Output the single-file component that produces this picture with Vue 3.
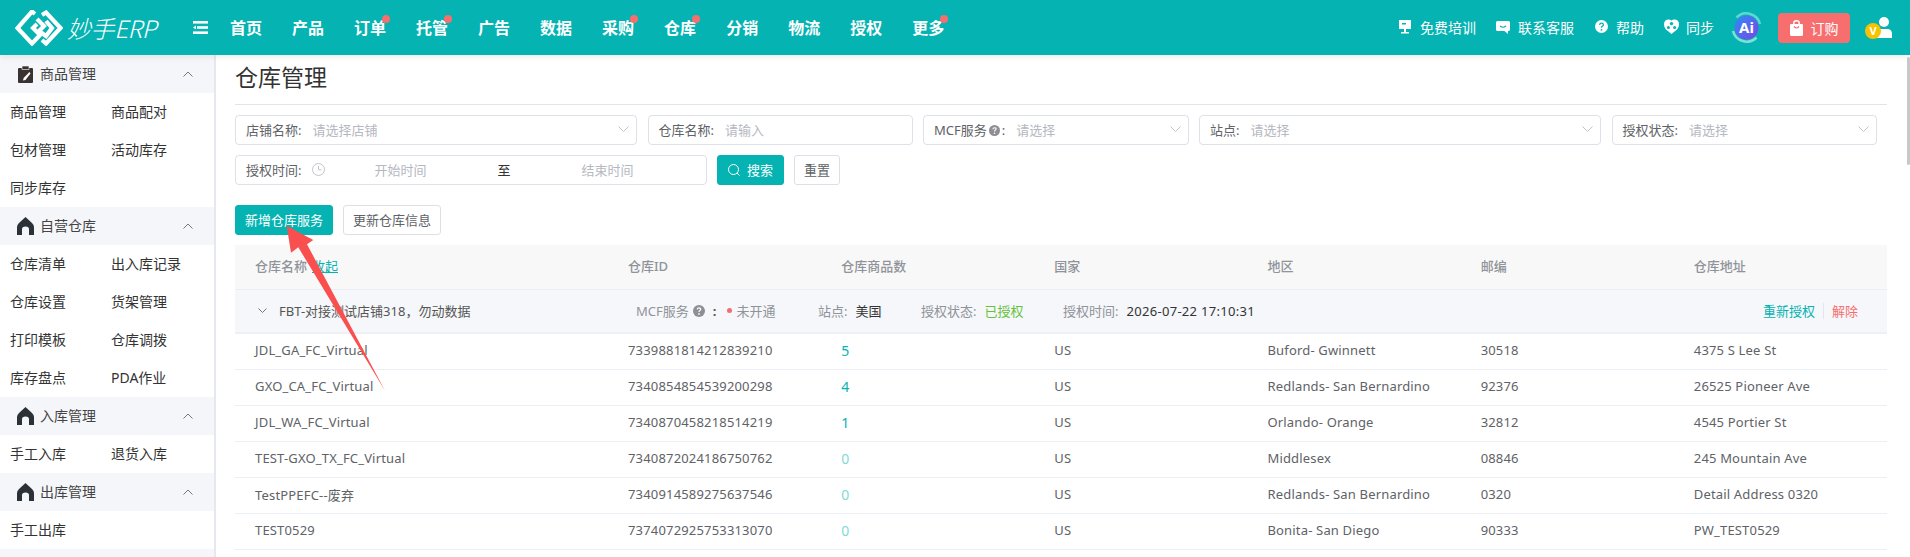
<script setup>
const navItems = [
  { label: "首页" },
  { label: "产品" },
  { label: "订单", dot: true },
  { label: "托管", dot: true },
  { label: "广告" },
  { label: "数据" },
  { label: "采购", dot: true },
  { label: "仓库", dot: true },
  { label: "分销" },
  { label: "物流" },
  { label: "授权" },
  { label: "更多", dot: true },
];

const menuGroups = [
  { title: "商品管理", icon: "clip", items: ["商品管理", "商品配对", "包材管理", "活动库存", "同步库存"] },
  { title: "自营仓库", icon: "home", items: ["仓库清单", "出入库记录", "仓库设置", "货架管理", "打印模板", "仓库调拨", "库存盘点", "PDA作业"] },
  { title: "入库管理", icon: "home", items: ["手工入库", "退货入库"] },
  { title: "出库管理", icon: "home", items: ["手工出库"] },
];

const columns = ["仓库ID", "仓库商品数", "国家", "地区", "邮编", "仓库地址"];

const rows = [
  ["JDL_GA_FC_Virtual", "7339881814212839210", 5, "US", "Buford- Gwinnett", "30518", "4375 S Lee St"],
  ["GXO_CA_FC_Virtual", "7340854854539200298", 4, "US", "Redlands- San Bernardino", "92376", "26525 Pioneer Ave"],
  ["JDL_WA_FC_Virtual", "7340870458218514219", 1, "US", "Orlando- Orange", "32812", "4545 Portier St"],
  ["TEST-GXO_TX_FC_Virtual", "7340872024186750762", 0, "US", "Middlesex", "08846", "245 Mountain Ave"],
  ["TestPPEFC--废弃", "7340914589275637546", 0, "US", "Redlands- San Bernardino", "0320", "Detail Address 0320"],
  ["TEST0529", "7374072925753313070", 0, "US", "Bonita- San Diego", "90333", "PW_TEST0529"],
];
</script>

<template>
  <div class="page">
    <header class="topbar">
      <div class="logo">
        <svg class="logo-mark" width="48" height="36" viewBox="0 0 48 36" fill="none" stroke="#fff" stroke-width="4.2">
          <path d="M20 4 L17 1.5 L2.5 18 L17 33.5 L25 25 L18 18 L22 14" />
          <path d="M27 5 L31 2.5 L45.5 18 L31 33.5 L27 30" />
          <path d="M22 9 L29 16 L24 21 L31 26 L37 18 L31 11" />
        </svg>
        <span class="logo-text">妙手ERP</span>
      </div>
      <svg class="collapse" width="15" height="13" viewBox="0 0 15 13" fill="#fff">
        <rect x="0" y="0" width="15" height="2.6" />
        <rect x="4" y="5.2" width="11" height="2.6" />
        <path d="M0 6.5 L3 4.6 V8.4 Z" />
        <rect x="0" y="10.4" width="15" height="2.6" />
      </svg>
      <nav class="nav">
        <a v-for="item in navItems" :key="item.label" class="nav-item">
          {{ item.label }}
          <i v-if="item.dot" class="nav-dot"></i>
        </a>
      </nav>
      <div class="top-right">
        <span class="top-link">
          <svg width="14" height="15" viewBox="0 0 14 15" fill="#fff">
            <path d="M1 1 H13 V10 H1 Z M4 4 V5.5 H8 V4 Z" fill-rule="evenodd" />
            <rect x="6" y="10" width="2" height="3" />
            <rect x="3" y="13" width="8" height="1.5" />
          </svg>
          免费培训
        </span>
        <span class="top-link">
          <svg width="14" height="14" viewBox="0 0 14 14" fill="#fff">
            <path d="M1.5 1 H12.5 Q14 1 14 2.5 V9.5 Q14 11 12.5 11 H12 V14 L8.5 11 H1.5 Q0 11 0 9.5 V2.5 Q0 1 1.5 1 Z" />
            <path d="M4 6 Q7 8.5 10 6" fill="none" stroke="#04b3b2" stroke-width="1.2" />
          </svg>
          联系客服
        </span>
        <span class="top-link">
          <svg width="13" height="13" viewBox="0 0 13 13">
            <circle cx="6.5" cy="6.5" r="6.5" fill="#fff" />
            <path d="M4.6 5 Q4.8 3.2 6.5 3.2 Q8.4 3.2 8.4 4.8 Q8.4 5.8 7.2 6.4 Q6.5 6.8 6.5 7.8" fill="none" stroke="#04b3b2" stroke-width="1.3" />
            <circle cx="6.5" cy="9.8" r="0.9" fill="#04b3b2" />
          </svg>
          帮助
        </span>
        <span class="top-link">
          <svg width="15" height="15" viewBox="0 0 15 15">
            <path d="M7.5 15 L2 10.5 Q0 8.5 0 5.5 Q0 1 4 .5 Q6 .2 7.5 1.5 Q9 .2 11 .5 Q15 1 15 5.5 Q15 8.5 13 10.5 Z" fill="#fff" />
            <circle cx="7.5" cy="4.6" r="1.7" fill="#04b3b2" />
            <circle cx="4.4" cy="8.6" r="1.5" fill="#04b3b2" />
            <circle cx="10.6" cy="8.6" r="1.5" fill="#04b3b2" />
          </svg>
          同步
        </span>
        <svg class="ai-badge" width="31" height="31" viewBox="0 0 31 31">
          <defs>
            <linearGradient id="aiFill" x1="0" y1="0" x2="1" y2="1">
              <stop offset="0" stop-color="#2d8cf5" />
              <stop offset="1" stop-color="#7a45e8" />
            </linearGradient>
          </defs>
          <path d="M5.5 5.5 A14 14 0 0 1 29 12" fill="none" stroke="#5fd6d0" stroke-width="2.6" />
          <path d="M25.5 25.5 A14 14 0 0 1 2 19" fill="none" stroke="#7fe0d8" stroke-width="2.6" />
          <circle cx="15.5" cy="15.5" r="12" fill="url(#aiFill)" />
          <text x="15.5" y="21" text-anchor="middle" class="ai-text">Ai</text>
        </svg>
        <button class="buy-btn">
          <svg width="13" height="16" viewBox="0 0 13 16" fill="#fff">
            <path d="M1 4 H12 Q13 4 13 5 V14.5 Q13 16 11.5 16 H1.5 Q0 16 0 14.5 V5 Q0 4 1 4 Z" />
            <path d="M3.8 5 V3 Q3.8 .8 6.5 .8 Q9.2 .8 9.2 3 V5" fill="none" stroke="#fff" stroke-width="1.5" />
            <path d="M4 6.5 Q6.5 9.5 9 6.5" fill="none" stroke="#f76e6f" stroke-width="1.2" />
          </svg>
          订购
        </button>
        <div class="user">
          <svg width="16" height="21" viewBox="0 0 16 21" fill="#fff">
            <circle cx="8" cy="5" r="5" />
            <path d="M0 21 V17 Q0 12 5 12 H11 Q16 12 16 17 V21 Z" />
          </svg>
          <span class="vip">V</span>
        </div>
      </div>
    </header>

    <div class="body">
      <aside class="sidebar">
        <section v-for="group in menuGroups" :key="group.title">
          <div class="menu-head">
            <svg v-if="group.icon === 'clip'" width="15" height="17" viewBox="0 0 15 17">
              <path d="M1 2 H14 Q15 2 15 3 V16 Q15 17 14 17 H1 Q0 17 0 16 V3 Q0 2 1 2 Z" fill="#3a3232" />
              <rect x="4" y="0" width="7" height="3.6" fill="#3a3232" stroke="#fff" stroke-width=".6" />
              <path d="M11.5 6 L12.5 7.5 L7.5 14 L5 14.6 L5.6 12 Z" fill="#fff" />
            </svg>
            <svg v-else width="17" height="18" viewBox="0 0 17 18">
              <path d="M8.5 0 L15 6 Q17 8 17 10 V18 H12 V12 Q12 9.5 8.5 9.5 Q5 9.5 5 12 V18 H0 V10 Q0 8 2 6 Z" fill="#2c3138" />
            </svg>
            <span class="menu-title">{{ group.title }}</span>
            <svg class="menu-arrow" width="10" height="6" viewBox="0 0 10 6" fill="none" stroke="#777" stroke-width="1">
              <path d="M.5 5.5 L5 1 L9.5 5.5" />
            </svg>
          </div>
          <div class="menu-items">
            <a v-for="item in group.items" :key="item" class="menu-item">{{ item }}</a>
          </div>
        </section>
        <div class="menu-tail"></div>
      </aside>

      <main class="main">
        <h1 class="title">仓库管理</h1>

        <div class="filters">
          <div class="field">
            <span class="field-label">店铺名称:</span>
            <span class="placeholder">请选择店铺</span>
            <svg class="chev" width="11" height="6" viewBox="0 0 11 6" fill="none" stroke="#c0c4cc"><path d="M.5 .5 L5.5 5.5 L10.5 .5" /></svg>
          </div>
          <div class="field">
            <span class="field-label">仓库名称:</span>
            <span class="placeholder">请输入</span>
          </div>
          <div class="field">
            <span class="field-label">MCF服务<svg class="tip" width="11" height="11" viewBox="0 0 11 11"><circle cx="5.5" cy="5.5" r="5.5" fill="#8d8f94" /><path d="M3.9 4.2 Q4 2.7 5.5 2.7 Q7.1 2.7 7.1 4 Q7.1 4.8 6.1 5.3 Q5.5 5.6 5.5 6.4" fill="none" stroke="#fff" stroke-width="1.1" /><circle cx="5.5" cy="8.2" r=".8" fill="#fff" /></svg>:</span>
            <span class="placeholder">请选择</span>
            <svg class="chev" width="11" height="6" viewBox="0 0 11 6" fill="none" stroke="#c0c4cc"><path d="M.5 .5 L5.5 5.5 L10.5 .5" /></svg>
          </div>
          <div class="field">
            <span class="field-label">站点:</span>
            <span class="placeholder">请选择</span>
            <svg class="chev" width="11" height="6" viewBox="0 0 11 6" fill="none" stroke="#c0c4cc"><path d="M.5 .5 L5.5 5.5 L10.5 .5" /></svg>
          </div>
          <div class="field">
            <span class="field-label">授权状态:</span>
            <span class="placeholder">请选择</span>
            <svg class="chev" width="11" height="6" viewBox="0 0 11 6" fill="none" stroke="#c0c4cc"><path d="M.5 .5 L5.5 5.5 L10.5 .5" /></svg>
          </div>
        </div>

        <div class="filters-second">
          <div class="field date-field">
            <span class="field-label">授权时间:</span>
            <svg class="clock" width="13" height="13" viewBox="0 0 13 13" fill="none" stroke="#c0c4cc">
              <circle cx="6.5" cy="6.5" r="6" />
              <path d="M6.5 3 V6.8 H9.5" />
            </svg>
            <span class="date-start placeholder">开始时间</span>
            <span class="date-sep">至</span>
            <span class="date-end placeholder">结束时间</span>
          </div>
          <button class="btn btn-primary btn-search">
            <svg width="12" height="12" viewBox="0 0 12 12" fill="none" stroke="#fff"><circle cx="5.5" cy="5.5" r="5" /><path d="M9 9 L11.5 11.5" /></svg>
            搜索
          </button>
          <button class="btn">重置</button>
        </div>

        <div class="actions">
          <button class="btn btn-primary">新增仓库服务</button>
          <button class="btn">更新仓库信息</button>
        </div>

        <table class="table">
          <colgroup>
            <col style="width: 373px" />
            <col v-for="c in columns" :key="c" />
          </colgroup>
          <thead>
            <tr>
              <th>仓库名称<a class="fold">收起</a></th>
              <th v-for="c in columns" :key="c">{{ c }}</th>
            </tr>
          </thead>
          <tbody>
            <tr class="group-row">
              <td colspan="7">
                <div class="group-line">
                  <svg class="group-chev" width="9" height="5" viewBox="0 0 9 5" fill="none" stroke="#777"><path d="M.5 .5 L4.5 4.5 L8.5 .5" /></svg>
                  <span class="group-name">FBT-对接测试店铺318，勿动数据</span>
                  <span class="meta-mcf">MCF服务
                    <svg class="tip" width="12" height="12" viewBox="0 0 11 11"><circle cx="5.5" cy="5.5" r="5.5" fill="#8d8f94" /><path d="M3.9 4.2 Q4 2.7 5.5 2.7 Q7.1 2.7 7.1 4 Q7.1 4.8 6.1 5.3 Q5.5 5.6 5.5 6.4" fill="none" stroke="#fff" stroke-width="1.1" /><circle cx="5.5" cy="8.2" r=".8" fill="#fff" /></svg>
                    <em class="colon">:</em><i class="status-dot"></i>未开通</span>
                  <span class="meta-site">站点:<b>美国</b></span>
                  <span class="meta-auth">授权状态:<b class="ok">已授权</b></span>
                  <span class="meta-time">授权时间:<b>2026-07-22 17:10:31</b></span>
                  <span class="ops"><a class="op-teal">重新授权</a><i class="op-sep"></i><a class="op-red">解除</a></span>
                </div>
              </td>
            </tr>
            <tr v-for="row in rows" :key="row[1]" class="data-row">
              <td>{{ row[0] }}</td>
              <td>{{ row[1] }}</td>
              <td><span class="count" :class="{ zero: row[2] === 0 }">{{ row[2] }}</span></td>
              <td>{{ row[3] }}</td>
              <td>{{ row[4] }}</td>
              <td>{{ row[5] }}</td>
              <td>{{ row[6] }}</td>
            </tr>
          </tbody>
        </table>
      </main>
    </div>

    <div class="scroll-thumb"></div>

    <svg class="annotation" width="110" height="175" viewBox="0 0 110 175">
      <path d="M1.7 .7 L28.3 15 L22 19.3 L100 165.7 L13.3 22.3 L6 27.7 Z" fill="#f9504f" />
    </svg>
  </div>
</template>

<style scoped>
.page {
  position: relative;
  height: 557px;
  overflow: hidden;
  background: #fff;
  font-family: "Noto Sans", "Noto Sans CJK SC", sans-serif;
  font-size: 13px;
  color: #606266;
}

.topbar {
  display: flex;
  align-items: center;
  height: 55px;
  background: #04b3b2;
  color: #fff;
  box-shadow: 0 2px 6px rgba(0, 0, 0, 0.08);
  position: relative;
  z-index: 2;
}

.logo {
  display: flex;
  align-items: center;
  width: 193px;
  padding-left: 15px;
  box-sizing: border-box;
  gap: 4px;
}

.logo-text {
  font-family: "Noto Sans CJK SC", sans-serif;
  font-style: italic;
  font-size: 24px;
  font-weight: 300;
  white-space: nowrap;
  letter-spacing: -0.4px;
}

.collapse {
  margin-right: 22px;
}

.nav {
  display: flex;
  gap: 30px;
  padding-bottom: 2px;
}

.nav-item {
  position: relative;
  font-family: "Noto Sans CJK SC", sans-serif;
  font-size: 16px;
  font-weight: 700;
  line-height: 24px;
}

.nav-dot {
  position: absolute;
  right: -4px;
  top: 0;
  width: 8px;
  height: 8px;
  border-radius: 50%;
  background: #f76e6f;
}

.top-right {
  display: flex;
  align-items: center;
  margin-left: auto;
  padding-right: 18px;
}

.top-link {
  display: flex;
  align-items: center;
  gap: 8px;
  padding-bottom: 2px;
  font-size: 14px;
  white-space: nowrap;
}

.top-link:nth-child(1) {
  margin-right: 20px;
}

.top-link:nth-child(2) {
  margin-right: 21px;
}

.top-link:nth-child(3) {
  margin-right: 20px;
}

.top-link:nth-child(4) {
  margin-right: 17px;
  gap: 7px;
}

.ai-badge {
  margin-right: 16px;
}

.ai-text {
  font-family: "Noto Sans", sans-serif;
  font-size: 15px;
  font-weight: 700;
  fill: #fff;
}

.buy-btn {
  display: flex;
  align-items: center;
  justify-content: center;
  gap: 8px;
  width: 72px;
  height: 30px;
  border: none;
  border-radius: 4px;
  background: #f76e6f;
  color: #fff;
  font: inherit;
  font-size: 14px;
}

.user {
  position: relative;
  width: 27px;
  height: 21px;
  margin-left: 15px;
  display: flex;
  justify-content: flex-end;
}

.vip {
  position: absolute;
  left: 0;
  top: 6px;
  width: 16px;
  height: 16px;
  border-radius: 50%;
  background: #f7c200;
  color: #fff;
  font-size: 11px;
  font-weight: 700;
  line-height: 16px;
  text-align: center;
}

.body {
  display: flex;
}

.sidebar {
  flex: 0 0 214px;
  height: 502px;
  overflow: hidden;
  border-right: 2px solid #e6e8f0;
  color: #333;
}

.menu-head {
  display: flex;
  align-items: center;
  height: 38px;
  padding-left: 17px;
  background: #f5f6fa;
  font-size: 14px;
}

.menu-head > svg:first-child {
  flex: 0 0 17px;
}

.menu-title {
  margin-left: 6px;
  padding-bottom: 2px;
  color: #444;
}

.menu-arrow {
  margin-left: auto;
  margin-right: 21px;
}

.menu-items {
  display: grid;
  grid-template-columns: 101px 101px;
  padding-left: 10px;
}

.menu-item {
  height: 38px;
  line-height: 37px;
  font-size: 14px;
  white-space: nowrap;
}

.menu-tail {
  height: 38px;
  background: #f5f6fa;
}

.main {
  flex: 1;
  min-width: 0;
  padding: 0 23px 0 19px;
}

.title {
  height: 49px;
  margin: 0;
  border-bottom: 1px solid #e3e3ec;
  font-size: 23px;
  font-weight: 400;
  line-height: 45px;
  color: #333;
}

.filters {
  display: grid;
  grid-template-columns: 402px 265px 265.5px 402px 265px;
  gap: 10.5px;
  margin-top: 10px;
}

.filters-second {
  display: flex;
  gap: 10px;
  margin-top: 10px;
}

.field {
  display: flex;
  align-items: center;
  height: 30px;
  padding: 0 7px 2px 10px;
  box-sizing: border-box;
  border: 1px solid #dfe1e8;
  border-radius: 4px;
  white-space: nowrap;
}

.field-label {
  margin-right: 11px;
  color: #606266;
}

.tip {
  margin: 0 2px 0 2px;
  vertical-align: -1px;
}

.placeholder {
  color: #b5b8bf;
}

.chev {
  margin-left: auto;
}

.date-field {
  width: 472px;
}

.date-start {
  margin-left: 49px;
}

.date-sep {
  margin-left: 71px;
  color: #333;
}

.date-end {
  margin-left: 71px;
}

.btn {
  height: 30px;
  padding: 0 9px 1px;
  border: 1px solid #dcdfe6;
  border-radius: 3px;
  background: #fff;
  color: #606266;
  font: inherit;
  display: inline-flex;
  align-items: center;
  gap: 7px;
}

.btn-search {
  padding: 0 10px 1px;
}

.btn-primary {
  border-color: #04b3b2;
  background: #04b3b2;
  color: #fff;
}

.actions {
  display: flex;
  gap: 10px;
  margin-top: 20px;
}

.table {
  width: 100%;
  margin-top: 10px;
  border-collapse: collapse;
  table-layout: fixed;
}

.table th {
  height: 44px;
  padding: 0 20px 2px;
  background: #f8f8f8;
  border-bottom: 1px solid #ebeef5;
  text-align: left;
  font-weight: 500;
  color: #909399;
  box-sizing: border-box;
}

.fold {
  margin-left: 5px;
  color: #04b3b2;
  font-weight: 400;
  text-decoration: underline;
}

.table td {
  height: 36px;
  padding: 0 20px 2px;
  border-bottom: 1px solid #ebeef5;
  box-sizing: border-box;
  white-space: nowrap;
}

.data-row td {
  letter-spacing: 0.17px;
}

.group-row td {
  height: 44px;
  padding: 0;
  background: #f5f7fa;
  border-bottom: 2px solid #eef0f5;
}

.group-line {
  display: flex;
  align-items: center;
  white-space: nowrap;
}

.group-chev {
  margin-left: 23px;
}

.group-name {
  width: 357px;
  margin-left: 12px;
  color: #555;
}

.group-line b {
  margin-left: 8px;
  font-weight: 400;
  color: #333;
}

.group-line b.ok {
  color: #67c23a;
}

.meta-mcf,
.meta-site,
.meta-auth,
.meta-time {
  color: #909399;
}

.meta-time b {
  letter-spacing: 0.3px;
}

.meta-mcf {
  display: inline-flex;
  align-items: center;
  width: 182px;
  gap: 2px;
}

.colon {
  font-style: normal;
  margin: 0 9px 0 4px;
  color: #555;
  font-weight: 700;
}

.status-dot {
  width: 5px;
  height: 5px;
  margin-right: 2px;
  border-radius: 50%;
  background: #f56c6c;
}

.meta-site {
  width: 103px;
}

.meta-auth {
  width: 142px;
}

.ops {
  display: flex;
  align-items: center;
  margin-left: auto;
  padding-right: 29px;
}

.op-teal {
  color: #04b3b2;
}

.op-red {
  color: #f76e6f;
}

.op-sep {
  width: 1px;
  height: 16px;
  margin: 0 8px;
  background: #e4e6ec;
}

.count {
  font-size: 14px;
  color: #04b3b2;
}

.count.zero {
  color: #82d9d8;
}

.scroll-thumb {
  position: absolute;
  right: 0;
  top: 57px;
  width: 3px;
  height: 108px;
  border-radius: 2px;
  background: #c8c8c8;
  z-index: 3;
}

.annotation {
  position: absolute;
  left: 285px;
  top: 225px;
  z-index: 4;
}
</style>

<style>
html,
body {
  margin: 0;
  overflow: hidden;
}

a {
  cursor: pointer;
}
</style>
